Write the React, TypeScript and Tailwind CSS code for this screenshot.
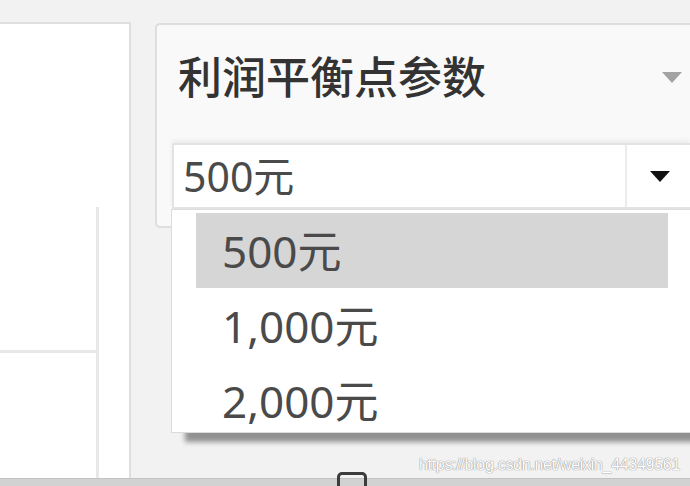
import React from "react";

const options = ["500元", "1,000元", "2,000元"];

function Caret({ color, className }: { color: string; className?: string }) {
  return (
    <svg viewBox="0 0 20 11" className={className}>
      <path d="M0 0 L20 0 L10 11 Z" fill={color} />
    </svg>
  );
}

export default function App() {
  const font = { fontFamily: '"Noto Sans", "Noto Sans CJK SC", sans-serif' };
  return (
    <div className="relative w-[690px] h-[486px] overflow-hidden bg-[#f2f2f2]" style={font}>
      <div className="flex h-[478px]">
        {/* left sheet panel */}
        <div className="mt-[22px] w-[131px] flex flex-col bg-white border-t-2 border-r-2 border-[#dedede]">
          <div className="h-[183px] shrink-0" />
          <div className="w-[99px] flex-1 border-r-[3px] border-[#e8e8e8]">
            <div className="h-[146px] border-b-[3px] border-[#e8e8e8]" />
          </div>
        </div>

        {/* parameter card */}
        <div className="ml-[24px] mt-[23px] h-[205px] flex-1 bg-[#f9f9f9] border-2 border-r-0 border-[#dedede] rounded-l-[5px]">
          <div className="h-[104px] flex items-center pl-[21px] pr-[6px]">
            <span className="flex-1 text-[44px] leading-none font-medium text-[#333]">利润平衡点参数</span>
            <Caret color="#a3a3a3" className="w-[20px] h-[11px] mr-[2px]" />
          </div>

          <div className="relative mt-[14px] ml-[15px] h-[66px] flex bg-white border-2 border-r-0 border-[#e3e3e3] shadow-[0_-3px_4px_rgba(0,0,0,0.05)]">
            <div className="flex-1 flex items-center pl-[9px] text-[41px] leading-none text-[#4a4a4a]">500元</div>
            <div className="w-[65px] flex items-center justify-center border-l-2 border-[#ececec]">
              <Caret color="#111" className="w-[20px] h-[11px] ml-[2px]" />
            </div>

            {/* open dropdown list */}
            <div className="absolute left-[-3px] top-[64px] w-[540px] h-[224px] bg-white border border-[#dcdcdc] pt-[3px] pl-[24px] shadow-[14px_9px_5px_rgba(0,0,0,0.4)]">
              {options.map((o, i) => (
                <div
                  key={o}
                  className={`w-[472px] h-[75px] flex items-center pl-[26px] text-[44px] leading-none text-[#4a4a4a] ${
                    i === 0 ? "bg-[#d6d6d6]" : ""
                  }`}
                >
                  {o}
                </div>
              ))}
            </div>
          </div>
        </div>
      </div>

      {/* status strip */}
      <div className="h-[8px] bg-[#d2d2d2] border-t border-[#c2c2c2]" />
      <div className="absolute left-[337px] top-[472px] w-[30px] h-[20px] rounded-[5px] border-[3px] border-[#3c3c3c]" />

      <div
        className="absolute right-[10px] top-[457px] text-[16px] leading-none tracking-[-0.3px] text-white [text-shadow:0_0_1px_#8a8a8a,0_0_1px_#8a8a8a]"
        style={{ fontFamily: '"Liberation Sans", Arial, sans-serif' }}
      >
        https://blog.csdn.net/weixin_44349561
      </div>
    </div>
  );
}
